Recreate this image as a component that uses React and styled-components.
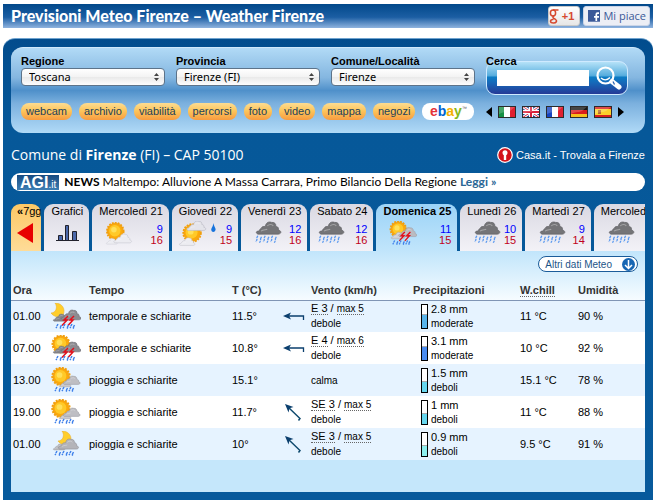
import React from 'react';
import styled, { createGlobalStyle } from 'styled-components';

const lucida = "'Open Sans', 'Noto Sans', sans-serif";
const lato = "Lato, 'Open Sans', sans-serif";

const GlobalStyle = createGlobalStyle`
	* { box-sizing: border-box; }
	body {
		margin: 0;
		background: #fff;
		color: #000;
		font-family: 'Liberation Sans', Arial, sans-serif;
		font-size: 11px;
	}
	a { color: inherit; text-decoration: none; }
	button, input, select { font: inherit; color: inherit; margin: 0; }
	button { cursor: pointer; }
	svg { display: block; flex: none; }
`;

const Page = styled.div`
	padding: 4px 9px 0 3px;
`;
const TopBar = styled.header`
	display: flex;
	align-items: center;
	justify-content: space-between;
	height: 24px;
	padding: 0 3px 0 8px;
	background: linear-gradient(#01488a, #1c5ea3 55%, #8fb3df);
	h1 {
		margin: 0;
		font: 900 16px/24px ${lato};
		color: #fff;
	}
`;
const Social = styled.div`
	display: flex;
	gap: 3px;
`;
const SocialButton = styled.button`
	display: flex;
	align-items: center;
	gap: 3px;
	height: 20px;
	padding: ${p => p.$pad};
	border: 1px solid ${p => p.$edge};
	border-radius: 3px;
	background: ${p => p.$back};
	color: ${p => p.$color};
	font: ${p => p.$weight || 'normal'} 11px/18px ${p => p.$weight ? "'Liberation Sans', Arial, sans-serif" : lucida};
	white-space: nowrap;
`;
const Panel = styled.main`
	margin-top: 10px;
	padding: 8px 8px 8px;
	border-top: 1px solid #6fa3cf;
	border-radius: 12px 12px 0 0;
	background: linear-gradient(#024c8d, #065899 90px, #075a9c);
`;
const SearchPanel = styled.section`
	height: 86px;
	padding: 6px 17px 0 10px;
	border-top: 1px solid #d0e8fa;
	border-radius: 12px;
	background: linear-gradient(#b1daf6, #84b6e0 35%, #4f90ca 50%, #7bb0de 65%, #b0daf7);
`;
const Fields = styled.div`
	display: flex;
	align-items: flex-start;
	gap: 11px;
`;
const Field = styled.div`
	flex: ${p => p.$flex || '0 0 144px'};
	label {
		display: block;
		position: relative;
		z-index: 1;
		font-weight: bold;
		line-height: 14px;
	}
`;
const SelectBox = styled.div`
	position: relative;
	select {
		appearance: none;
		display: block;
		width: 100%;
		height: 18px;
		padding: 0 18px 0 7px;
		border: 1px solid #5d7389;
		border-radius: 4px;
		background: linear-gradient(#fff, #f3f3f3 50%, #e9e9e9 51%, #fdfdfd);
		font: 11px/16px 'Noto Sans', sans-serif;
	}
	svg {
		position: absolute;
		right: 6px;
		top: 5px;
		pointer-events: none;
	}
`;
const SearchBox = styled.div`
	display: flex;
	align-items: center;
	justify-content: space-between;
	height: 34px;
	margin-top: -7px;
	padding: 0 5px 0 10px;
	border: 1px solid #cfeaff;
	border-radius: 9px;
	background: linear-gradient(#b5e2f8, #58aede 42%, #0c7bc4 48%, #1668b8 65%, #253a96);
	input {
		width: 92px;
		height: 16px;
		padding: 0 3px;
		border: 0;
		background: #fff;
	}
	button {
		padding: 0;
		border: 0;
		background: none;
	}
`;
const Links = styled.nav`
	display: flex;
	align-items: center;
	gap: 7px;
	margin-top: 8px;
`;
const Pill = styled.a`
	height: 17px;
	padding: 0 5px;
	border-radius: 8px;
	background: linear-gradient(#fcdc92, #fdc65c 45%, #f79c40);
	color: #23415a;
	line-height: 16px;
`;
const Ebay = styled.a`
	width: 52px;
	height: 17px;
	border-radius: 8px;
	background: #fff;
	font-size: 14px;
	line-height: 16px;
	text-align: center;
	sup { font-size: 5px; line-height: 1px; color: #555; }
`;
const Letter = styled.b`
	color: ${p => p.$color};
`;
const Flags = styled.div`
	display: flex;
	align-items: center;
	gap: 6px;
	margin-left: auto;
	padding-right: 4px;
	a { display: block; }
`;
const Place = styled.div`
	display: flex;
	align-items: center;
	justify-content: space-between;
	height: 40px;
	padding-top: 4px;
	color: #fff;
	h2 {
		margin: 0;
		font: 14px/20px ${lucida};
	}
	a {
		display: flex;
		align-items: center;
		gap: 3px;
	}
`;
const News = styled.div`
	display: flex;
	align-items: center;
	height: 18px;
	padding-left: 6px;
	border-radius: 9px;
	background: #fff;
	font: 12px/16px ${lato};
	white-space: nowrap;
	p { margin: 0 0 0 5px; }
	a { color: #2b6796; font-weight: bold; }
`;
const Agi = styled.span`
	display: flex;
	align-items: baseline;
	height: 15px;
	padding: 0 3px;
	background: linear-gradient(#174a80, #3d7fb5);
	color: #fff;
	font: bold 16px/16px 'Liberation Sans', Arial, sans-serif;
	small { font-size: 10px; font-weight: normal; }
`;
const Tabs = styled.nav`
	display: flex;
	gap: 3px;
	margin-top: 13px;
	overflow: hidden;
`;
const Tab = styled.button`
	flex: ${p => p.$rest ? '1 0 auto' : 'none'};
	display: flex;
	flex-direction: column;
	height: 47px;
	padding: ${p => p.$narrow ? '0 0 0 6px' : p.$rest ? '0 0 0 7px' : '0 6px 0 7px'};
	border: 0;
	border-radius: ${p => p.$rest ? '9px 0 0 0' : '9px 9px 0 0'};
	background: ${p => p.$active ? 'linear-gradient(#9bd3f7, #c1e5fb)' : p.$narrow ? 'linear-gradient(#fdc865, #fedc98)' : 'linear-gradient(#d9d8e2, #f3f2f7)'};
	font-weight: ${p => p.$active ? 'bold' : 'normal'};
	line-height: 15px;
	text-align: left;
	white-space: nowrap;
`;
const TabBody = styled.span`
	display: flex;
	align-items: center;
	justify-content: ${p => p.$center ? 'center' : 'space-between'};
	width: 100%;
	height: 28px;
	padding-left: ${p => p.$inset ? '6px' : '0'};
`;
const Temps = styled.span`
	display: flex;
	flex-direction: column;
	margin-top: 3px;
	font-weight: normal;
	line-height: 11px;
	text-align: right;
	span:first-child { color: #00f; }
	span:last-child { color: #c00020; }
`;
const Content = styled.section`
	padding-bottom: 32px;
	background: linear-gradient(#c1e5fb, #f7fcff 50px, #c5e7fb 50px);
`;
const Tools = styled.div`
	display: flex;
	justify-content: flex-end;
	padding: 5px 7px 8px 0;
`;
const MoreButton = styled.button`
	display: flex;
	align-items: center;
	gap: 10px;
	height: 16px;
	padding: 0 2px 0 6px;
	border: 1px solid #1b5c9a;
	border-radius: 8px;
	background: #fff;
	color: #1b5487;
	font-size: 10px;
`;
const Forecast = styled.table`
	width: 100%;
	table-layout: fixed;
	border-collapse: collapse;
	th {
		height: 20px;
		padding: 0 2px;
		border-bottom: 1px solid #8095b5;
		color: #333;
		text-align: left;
		white-space: nowrap;
	}
	td {
		height: 32px;
		padding: 0 2px;
		white-space: nowrap;
	}
	tbody tr { background: #fff; }
	tbody tr:nth-child(odd) { background: #e6f3ff; }
`;
const Col = styled.col`
	width: ${p => p.$width}px;
`;
const Dotted = styled.span`
	border-bottom: 1px dotted #666;
`;
const Detail = styled.div`
	line-height: 14px;
	small { font-size: 10px; }
`;
const Rainfall = styled.div`
	display: flex;
	align-items: center;
	gap: 3px;
	padding-left: 8px;
`;
const Gauge = styled.div`
	display: flex;
	align-items: flex-end;
	width: 7px;
	height: 25px;
	border: 1px solid #000;
	background: #fff;
`;
const Level = styled.div`
	width: 100%;
	border-top: 1px solid #aaa;
	background: ${p => p.$color};
`;

const CLOUD = 'M2 12C-.5 11 0 9 2.500 9C4 8 3 7.500 5 6.500C6 4 7.500 4.500 9 4.500C10 0 13 -.5 15.500 .5C18 0 20 2 19.500 4.500C22 4.500 22.500 6.500 22 8C25 8.500 25.500 11.500 22 12Z';

function Cloud({x, y, s = 1, fill = '#b9b9bd', edge = '#909096'}) {
	return (
		<g transform={`translate(${x} ${y}) scale(${s})`}>
			<path d={CLOUD} fill={fill} stroke={edge} strokeWidth='.7'/>
			<path d='M5 9c2-2 5-1 6-2M11 4c2-2 5-2 6 0' stroke='#fff' strokeOpacity='.35' fill='none'/>
		</g>
	)
}
function Sun({x, y, r}) {
	return (
		<g>
			<circle cx={x} cy={y} r={r + 0.5} fill='none' stroke='#f0a010' strokeWidth='2' strokeDasharray='2 1.200'/>
			<circle cx={x} cy={y} r={r} fill='#fba90c' stroke='#ef9a0c' strokeWidth='.8'/>
			<circle cx={x - 0.5} cy={y - 0.5} r={r * 0.72} fill='#ffc928'/>
			<circle cx={x - 1.5} cy={y - 1.5} r={r * 0.35} fill='#ffe05a'/>
		</g>
	)
}
function Moon({x, y}) {
	return <path transform={`translate(${x} ${y})`} d='M4 0C11 0 15 6 12 12C8 16 2 13 0 10C5 10 7 4 4 0Z' fill='#ffce2c' stroke='#eab030' strokeWidth='.6'/>
}
function Drops({x, y, tall}) {
	const h = tall ? 4.5 : 2
	return (
		<g transform={`translate(${x} ${y})`} stroke={tall ? '#5b9af0' : '#3f80ea'} fill='none' strokeWidth='1.400'>
			{(tall ? [0, 4, 8, 12, 16, 20] : [0, 3.5, 7, 10.5, 14, 16.5]).map((d, i) => (
				<path key={d} d={`M${d + 2} ${i % 2 ? 1 : 0}l-1 2v${h / 2}l-1.200 ${h / 2}`} strokeDasharray={i % 2 ? '4 .8' : '2.500 .8'}/>
			))}
		</g>
	)
}
function Bolts({x, y}) {
	return (
		<g transform={`translate(${x} ${y})`} fill='none' stroke='#e3101c' strokeWidth='1.500'>
			<path d='M7 0L3 4H6L1 9.500'/>
			<path d='M13 0L9 4H12L7 9.500'/>
		</g>
	)
}

function WeatherIcon({kind, width = 30, height = 27}) {
	return (
		<svg width={width} height={height} viewBox='0 0 30 27' aria-hidden='true'>
			{kind === 'fair' && <>
				<Sun x={11} y={11} r={8.5}/>
				<Cloud x={1} y={19} s={0.5} fill='#ececf1' edge='#c3c3cc'/>
				<Cloud x={9} y={14} s={0.8} fill='#ececf1' edge='#c3c3cc'/>
			</>}
			{kind === 'veiled' && <>
				<Sun x={14} y={13} r={9}/>
				<Cloud x={8} y={0} s={0.85} fill='#e4e4ea' edge='#b3b3bd'/>
				<Cloud x={0} y={18} s={0.7} fill='#ececf1' edge='#bdbdc6'/>
			</>}
			{kind === 'rain' && <>
				<Cloud x={2} y={1} s={1.1} fill='#747477' edge='#666669'/>
				<Drops x={2} y={16} tall/>
			</>}
			{kind === 'stormSun' && <>
				<Sun x={10} y={9} r={8}/>
				<Cloud x={2} y={11} s={0.6} fill='#86868b' edge='#707076'/>
				<Cloud x={10} y={7} s={0.82} fill='#8c8c91' edge='#6c6c72'/>
				<Bolts x={10} y={13}/>
				<Drops x={5} y={21}/>
			</>}
			{kind === 'stormLight' && <>
				<Sun x={10} y={9} r={8}/>
				<Cloud x={2} y={12} s={0.6} fill='#cfcfd4' edge='#9a9aa2'/>
				<Cloud x={10} y={7} s={0.82} fill='#bbbbc0' edge='#9a9aa2'/>
				<Bolts x={10} y={12}/>
				<Drops x={4} y={21}/>
			</>}
			{kind === 'stormMoon' && <>
				<Moon x={0} y={0}/>
				<Cloud x={2} y={11} s={0.6} fill='#86868b' edge='#707076'/>
				<Cloud x={10} y={7} s={0.82} fill='#8c8c91' edge='#6c6c72'/>
				<Bolts x={10} y={13}/>
				<Drops x={5} y={21}/>
			</>}
			{kind === 'rainSun' && <>
				<Sun x={10} y={9.5} r={8.2}/>
				<Cloud x={8} y={14} s={0.5} fill='#c8c8cd' edge='#a0a0a8'/>
				<Cloud x={12} y={9} s={0.7} fill='#bebec3' edge='#94949b'/>
				<Drops x={4} y={20}/>
			</>}
			{kind === 'rainMoon' && <>
				<Moon x={7} y={0}/>
				<Cloud x={2} y={13} s={0.5} fill='#bcbcc1' edge='#94949b'/>
				<Cloud x={7} y={8} s={0.84} fill='#b4b4b9' edge='#8c8c93'/>
				<Drops x={4} y={20}/>
			</>}
		</svg>
	)
}

function WindArrow({dir}) {
	return (
		<svg width='22' height='20' viewBox='0 0 22 20' aria-hidden='true'>
			{dir === 'E' ?
				<g fill='none' stroke='#0b3f6e' strokeWidth='1.300'>
					<path d='M5 10H20.500V14'/>
					<path d='M0 10L8 6.500L6 10L8 13.500Z' fill='#0b3f6e' stroke='none'/>
				</g>
				:
				<g fill='none' stroke='#0f4a6e' strokeWidth='1.500'>
					<path d='M5 5L17 16.500L15.500 18.500'/>
					<path d='M2 2L10.500 5L6.500 6.300L5.500 10.500Z' fill='#0b3f6e' stroke='none'/>
				</g>
			}
		</svg>
	)
}

function Flag({name, children}) {
	return (
		<a href='#' aria-label={name}>
			<svg width='18' height='12' viewBox='0 0 18 12'>
				{children}
				<path d='M0 0H18L12 5C8 7 5 5 0 9Z' fill='#fff' opacity='.2'/>
				<rect x='.5' y='.5' width='17' height='11' fill='none' stroke='#2b2b2b'/>
			</svg>
		</a>
	)
}

function PickList({id, label, value}) {
	return (
		<Field>
			<label htmlFor={id}>{label}</label>
			<SelectBox>
				<select id={id} defaultValue={value}>
					<option>{value}</option>
				</select>
				<svg width='5' height='8' viewBox='0 0 5 8'><path d='M0 3L2.500 0L5 3ZM0 5H5L2.500 8Z' fill='#444'/></svg>
			</SelectBox>
		</Field>
	)
}

const pills = ['webcam', 'archivio', 'viabilità', 'percorsi', 'foto', 'video', 'mappa', 'negozi'];
const days = [
	{day: 'Mercoledì 21', kind: 'fair', min: 9, max: 16, inset: true},
	{day: 'Giovedì 22', kind: 'veiled', min: 9, max: 15, drop: true},
	{day: 'Venerdì 23', kind: 'rain', min: 12, max: 16, inset: true},
	{day: 'Sabato 24', kind: 'rain', min: 12, max: 16},
	{day: 'Domenica 25', kind: 'stormLight', min: 11, max: 15, active: true, inset: true},
	{day: 'Lunedì 26', kind: 'rain', min: 10, max: 15, inset: true},
	{day: 'Martedì 27', kind: 'rain', min: 9, max: 14, inset: true},
	{day: 'Mercoled', kind: 'rain', rest: true, inset: true},
];
const rows = [
	{hour: '01.00', kind: 'stormMoon', text: 'temporale e schiarite', temp: '11.5°', dir: 'E', wind: 'E 3', gust: 'max 5', force: 'debole', rain: '2.8 mm', rate: 'moderate', level: 14, color: '#58b4ea', chill: '11 °C', hum: '90 %'},
	{hour: '07.00', kind: 'stormSun', text: 'temporale e schiarite', temp: '10.8°', dir: 'E', wind: 'E 4', gust: 'max 6', force: 'debole', rain: '3.1 mm', rate: 'moderate', level: 14, color: '#4a8cf0', chill: '10 °C', hum: '92 %'},
	{hour: '13.00', kind: 'rainSun', text: 'pioggia e schiarite', temp: '15.1°', force: 'calma', rain: '1.5 mm', rate: 'deboli', level: 11, color: '#66d6ee', chill: '15.1 °C', hum: '78 %'},
	{hour: '19.00', kind: 'rainSun', text: 'pioggia e schiarite', temp: '11.7°', dir: 'SE', wind: 'SE 3', gust: 'max 5', force: 'debole', rain: '1 mm', rate: 'deboli', level: 11, color: '#66d6ee', chill: '11 °C', hum: '88 %'},
	{hour: '01.00', kind: 'rainMoon', text: 'pioggia e schiarite', temp: '10°', dir: 'SE', wind: 'SE 3', gust: 'max 5', force: 'debole', rain: '0.9 mm', rate: 'deboli', level: 11, color: '#8cefee', chill: '9.5 °C', hum: '91 %'},
];

function ForecastRow({row}) {
	return (
		<tr>
			<td>{row.hour}</td>
			<td><WeatherIcon kind={row.kind}/></td>
			<td>{row.text}</td>
			<td>{row.temp}</td>
			<td>{row.dir && <WindArrow dir={row.dir}/>}</td>
			<td>
				<Detail>
					{row.wind && <div><Dotted>{row.wind}</Dotted> / <Dotted as='small'>{row.gust}</Dotted></div>}
					<small>{row.force}</small>
				</Detail>
			</td>
			<td>
				<Rainfall>
					<Gauge><Level $color={row.color} style={{height: row.level}}/></Gauge>
					<Detail>
						<div>{row.rain}</div>
						<small>{row.rate}</small>
					</Detail>
				</Rainfall>
			</td>
			<td>{row.chill}</td>
			<td>{row.hum}</td>
		</tr>
	)
}

export default function App() {
	return (
		<Page>
			<GlobalStyle/>
			<TopBar>
				<h1>Previsioni Meteo Firenze – Weather Firenze</h1>
				<Social>
					<SocialButton $pad='0 5px 0 0' $edge='#c9c9c9' $back='linear-gradient(#fff, #e6e6e6)' $color='#d6492f' $weight='bold'>
						<svg width='10' height='15' viewBox='0 0 10 15' fill='none' stroke='#d6492f' strokeWidth='1.500'>
							<ellipse cx='4' cy='4' rx='2.600' ry='3'/>
							<path d='M4 1H9.500M5 7C3 8 4 9 6 10C9 12 7 14 4.500 14C1 14 0 11 4.500 10.300'/>
						</svg>
						+1
					</SocialButton>
					<SocialButton $pad='0 3px 0 4px' $edge='#cad4e7' $back='#eceef5' $color='#3b5998'>
						<svg width='12' height='12' viewBox='0 0 12 12'>
							<rect width='12' height='12' fill='#3b5998'/>
							<path d='M11 3.200H9.500Q8.300 3.200 8.300 4.500V12M6 6.800H11' fill='none' stroke='#fff' strokeWidth='1.700'/>
							<path d='M0 11.500H12' stroke='#6d84b4'/>
						</svg>
						Mi piace
					</SocialButton>
				</Social>
			</TopBar>
			<Panel>
				<SearchPanel>
					<Fields>
						<PickList id='regione' label='Regione' value='Toscana'/>
						<PickList id='provincia' label='Provincia' value='Firenze (FI)'/>
						<PickList id='comune' label='Comune/Località' value='Firenze'/>
						<Field $flex='1'>
							<label htmlFor='cerca'>Cerca</label>
							<SearchBox>
								<input id='cerca' type='text'/>
								<button aria-label='Cerca'>
									<svg width='27' height='24' viewBox='0 0 27 24' fill='none' stroke='#fff'>
										<circle cx='10.500' cy='9.500' r='8' strokeWidth='2.200'/>
										<path d='M6 12Q10.500 16 15 11.500' strokeWidth='1.400'/>
										<path d='M17 15.500L24 21' strokeWidth='5' strokeLinecap='round'/>
										<path d='M18 15.500L19.500 18.500' stroke='#2a62b0' strokeWidth='1.200'/>
									</svg>
								</button>
							</SearchBox>
						</Field>
					</Fields>
					<Links>
						{pills.map(name => <Pill key={name} href='#'>{name}</Pill>)}
						<Ebay href='#'><Letter $color='#e53238'>e</Letter><Letter $color='#0064d2'>b</Letter><Letter $color='#f5af02'>a</Letter><Letter $color='#86b817'>y</Letter><sup>™</sup></Ebay>
						<Flags>
							<svg width='6' height='10'><path d='M6 0V10L0 5Z'/></svg>
							<Flag name='Italiano'><rect width='18' height='12' fill='#fff'/><rect width='6' height='12' fill='#168f43'/><rect x='12' width='6' height='12' fill='#e02030'/></Flag>
							<Flag name='English'>
								<rect width='18' height='12' fill='#1c3f8f'/>
								<path d='M0 0L18 12M18 0L0 12' stroke='#fff' strokeWidth='3'/>
								<path d='M0 0L18 12M18 0L0 12' stroke='#d8203a'/>
								<path d='M9 0V12M0 6H18' stroke='#fff' strokeWidth='4'/>
								<path d='M9 0V12M0 6H18' stroke='#d8203a' strokeWidth='2'/>
							</Flag>
							<Flag name='Français'><rect width='18' height='12' fill='#fff'/><rect width='6' height='12' fill='#1644c0'/><rect x='12' width='6' height='12' fill='#e02030'/></Flag>
							<Flag name='Deutsch'><rect width='18' height='4' fill='#181818'/><rect y='4' width='18' height='4' fill='#d91c1c'/><rect y='8' width='18' height='4' fill='#f5bf1c'/></Flag>
							<Flag name='Español'><rect width='18' height='12' fill='#d8201c'/><rect y='3' width='18' height='6' fill='#fcd02a'/><rect x='4' y='4' width='3' height='4' fill='#b5672a'/></Flag>
							<svg width='6' height='10'><path d='M0 0V10L6 5Z'/></svg>
						</Flags>
					</Links>
				</SearchPanel>
				<Place>
					<h2>Comune di <b>Firenze</b> (FI) – CAP 50100</h2>
					<a href='#'>
						<svg width='16' height='16' viewBox='0 0 16 16'>
							<circle cx='8' cy='8' r='7.300' fill='#d3131b' stroke='#fff' strokeWidth='1.200'/>
							<circle cx='8' cy='5.800' r='2.500' fill='#fff'/>
							<path d='M6.800 7H9.200V13H6.800Z' fill='#fff'/>
						</svg>
						Casa.it - Trovala a Firenze
					</a>
				</Place>
				<News>
					<Agi>AGI<small>.it</small></Agi>
					<p><b>NEWS</b> Maltempo: Alluvione A Massa Carrara, Primo Bilancio Della Regione <a href='#'>Leggi »</a></p>
				</News>
				<Tabs>
					<Tab $narrow>
						<span><b>«</b>7gg</span>
						<TabBody>
							<svg width='18' height='20' viewBox='0 0 18 20'><path d='M16 0V20L0 10Z' fill='#e80000'/></svg>
						</TabBody>
					</Tab>
					<Tab>
						Grafici
						<TabBody $center>
							<svg width='24' height='18' viewBox='0 0 24 18' fill='#4c69ab' stroke='#22222c'>
								<path d='M3.500 16.500V11.500H7.500V16.500ZM10.500 16.500V1.500H13.500V16.500ZM17.500 16.500V7.500H21.500V16.500Z'/>
								<path d='M1 16.500H24'/>
							</svg>
						</TabBody>
					</Tab>
					{days.map(d => (
						<Tab key={d.day} $active={d.active} $rest={d.rest}>
							{d.day}
							<TabBody $inset={d.inset}>
								<WeatherIcon kind={d.kind} width={28} height={25}/>
								{d.drop && <svg width='5' height='20' viewBox='0 0 5 20'><path d='M2.500 0C3 4 5 5 4.500 7C4 9.500 .5 9.500 .3 7C0 5 2 4 2.500 0Z' fill='#1673dc'/></svg>}
								{d.min && <Temps><span>{d.min}</span><span>{d.max}</span></Temps>}
							</TabBody>
						</Tab>
					))}
				</Tabs>
				<Content>
					<Tools>
						<MoreButton>
							Altri dati Meteo
							<svg width='13' height='13' viewBox='0 0 13 13'>
								<circle cx='6.500' cy='6.500' r='6.500' fill='#1766b3'/>
								<path d='M6.500 2V10M3 7L6.500 10.500L10 7' fill='none' stroke='#fff' strokeWidth='1.500'/>
							</svg>
						</MoreButton>
					</Tools>
					<Forecast>
						<colgroup>
							<Col $width={38}/>
							<Col $width={38}/>
							<Col $width={143}/>
							<Col $width={51}/>
							<Col $width={28}/>
							<Col $width={102}/>
							<Col $width={107}/>
							<Col $width={58}/>
							<col/>
						</colgroup>
						<thead>
							<tr>
								<th>Ora</th>
								<th aria-label='Icona'/>
								<th>Tempo</th>
								<th>T (°C)</th>
								<th aria-label='Direzione'/>
								<th>Vento (km/h)</th>
								<th>Precipitazioni</th>
								<th><Dotted>W.chill</Dotted></th>
								<th>Umidità</th>
							</tr>
						</thead>
						<tbody>
							{rows.map((row, i) => <ForecastRow key={i} row={row}/>)}
						</tbody>
					</Forecast>
				</Content>
			</Panel>
		</Page>
	)
}
